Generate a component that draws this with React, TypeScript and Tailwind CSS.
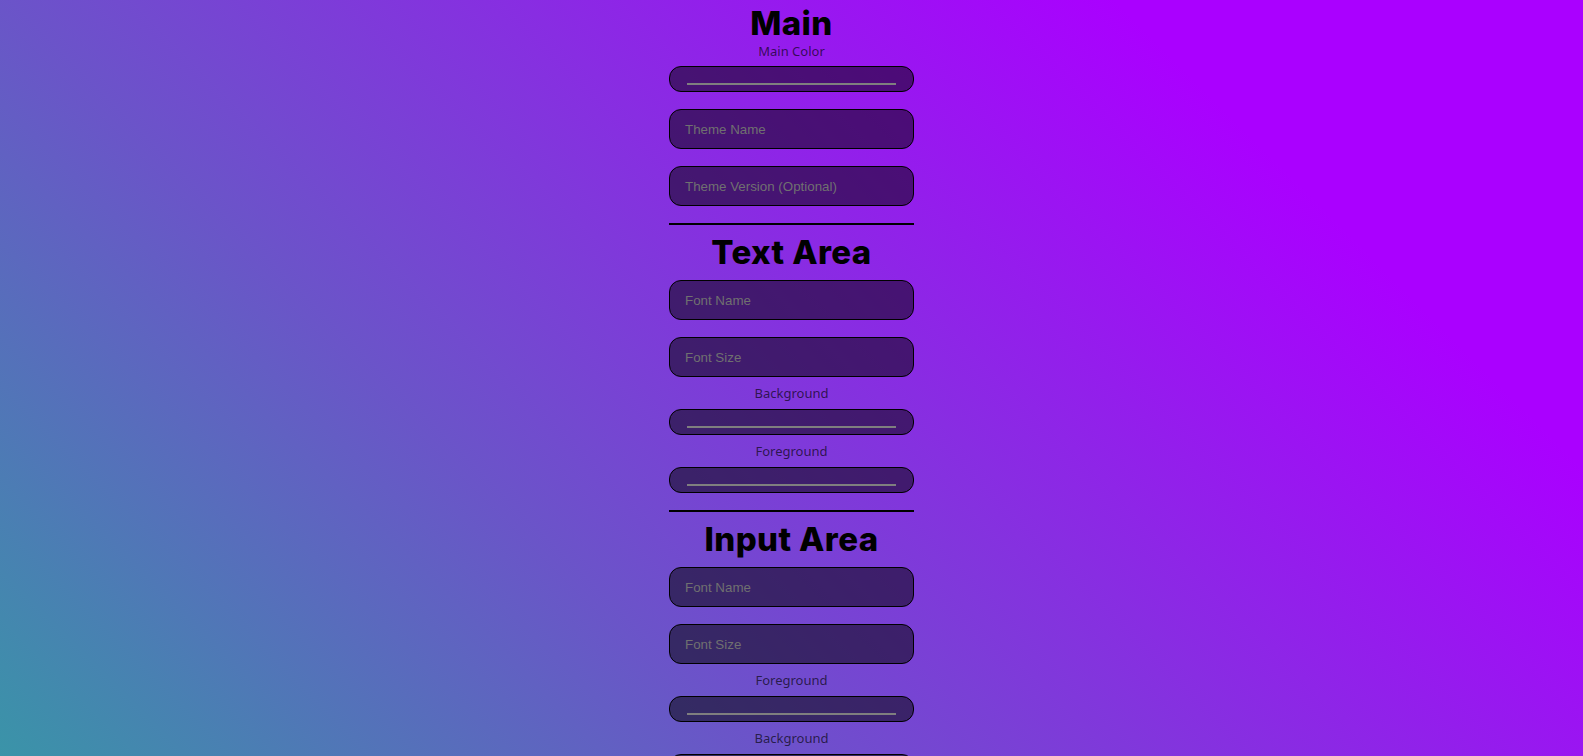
import { useState } from "react";

type ColorFieldProps = {
  label?: string;
  value: string;
  onChange: (v: string) => void;
  labelClass?: string;
};

const ColorField = ({ label, labelClass }: ColorFieldProps) => {
  return (
    <>
      {label && (
        <label
          className={`block text-center font-['Noto_Sans',sans-serif] text-[13px] leading-[14px] text-black/65 ${labelClass ?? "my-[9px]"}`}
        >
          {label}
        </label>
      )}
      <div className="flex h-[26px] w-full flex-col justify-end rounded-xl border border-black bg-black/50 px-[17px] pb-[6px]">
        <div className="h-[2px] w-full bg-[#7f7f7f]"></div>
      </div>
    </>
  );
};

const TextField = ({
  placeholder,
  className,
}: {
  placeholder: string;
  className?: string;
}) => {
  const [value, setValue] = useState("");
  return (
    <input
      type="text"
      value={value}
      placeholder={placeholder}
      onChange={(e) => setValue(e.target.value)}
      className={`block h-[40px] w-full rounded-xl border border-black bg-black/50 pr-4 pl-[15px] font-['Liberation_Sans',Arial,sans-serif] text-[13.33px] text-white outline-none placeholder:text-[#707070] ${className ?? ""}`}
    />
  );
};

const Heading = ({ children }: { children: string }) => (
  <h2 className="text-center font-['Inter',sans-serif] text-[33px] leading-[38px] font-extrabold tracking-[0.4px] text-black">
    {children}
  </h2>
);

const Divider = () => <div className="mt-[17px] h-[2px] w-full bg-black"></div>;

const App = () => {
  const [mainColor, setMainColor] = useState("#000000");
  const [textBg, setTextBg] = useState("#000000");
  const [textFg, setTextFg] = useState("#000000");
  const [inputFg, setInputFg] = useState("#000000");
  const [inputBg, setInputBg] = useState("#000000");

  return (
    <div className="min-h-screen w-full bg-[linear-gradient(45deg,#3a94a8_0%,#6a55c8_32%,#a0f_80%)] bg-fixed">
      <div className="mx-auto flex w-[245px] flex-col pt-[4px] pb-10">
        <Heading>Main</Heading>
        <ColorField
          label="Main Color"
          labelClass="mt-[2px] mb-[8px]"
          value={mainColor}
          onChange={setMainColor}
        />
        <TextField placeholder="Theme Name" className="mt-[17px]" />
        <TextField placeholder="Theme Version (Optional)" className="mt-[17px]" />

        <Divider />
        <div className="mt-[8px]">
          <Heading>Text Area</Heading>
        </div>
        <TextField placeholder="Font Name" className="mt-[9px]" />
        <TextField placeholder="Font Size" className="mt-[17px]" />
        <ColorField label="Background" value={textBg} onChange={setTextBg} />
        <ColorField label="Foreground" value={textFg} onChange={setTextFg} />

        <Divider />
        <div className="mt-[8px]">
          <Heading>Input Area</Heading>
        </div>
        <TextField placeholder="Font Name" className="mt-[9px]" />
        <TextField placeholder="Font Size" className="mt-[17px]" />
        <ColorField label="Foreground" value={inputFg} onChange={setInputFg} />
        <ColorField label="Background" value={inputBg} onChange={setInputBg} />
      </div>
    </div>
  );
};

export default App;
